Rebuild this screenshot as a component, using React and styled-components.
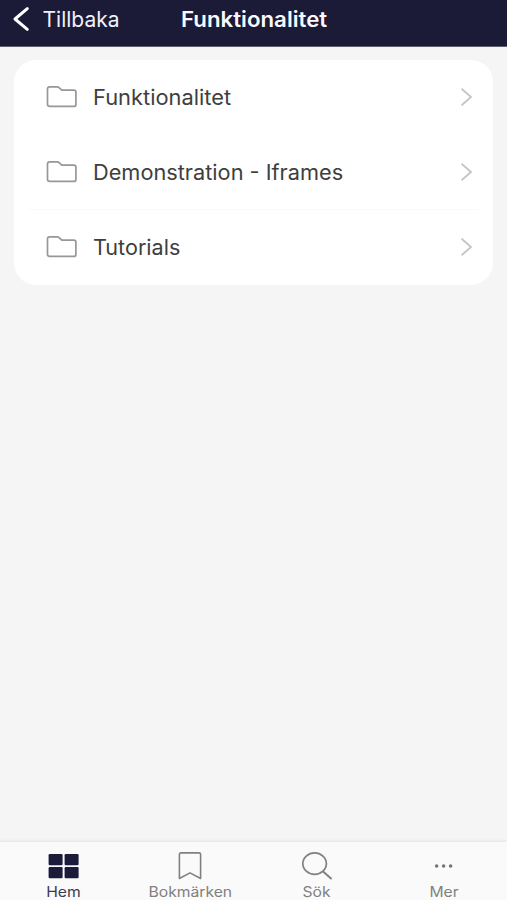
import React from "react";
import styled, { createGlobalStyle } from "styled-components";

// Global Style
const GlobalStyle = createGlobalStyle`
  * {
    box-sizing: border-box;
  }

  body {
    margin: 0;
    font-family: Inter, "Liberation Sans", sans-serif;
    background: #f5f5f5;
  }
`;

const folders = [
  { name: "Funktionalitet", stretch: 1.041 },
  { name: "Demonstration - Iframes", stretch: 1.035, divider: true },
  { name: "Tutorials", stretch: 1.028 },
];

const FolderIcon = () => (
  <svg width="32" height="24" viewBox="0 0 32 24" fill="none" stroke="#979797" strokeWidth="1.7" strokeLinejoin="round">
    <path d="M1.5 4C1.5 2.6 2.3 1.9 3.7 1.9H11.1C12.1 1.9 12.7 2.2 13.4 2.9L15.2 4.6C15.7 5.1 16.1 5.2 16.8 5.2H27.8C29.2 5.2 29.9 5.9 29.9 7.1V19.4C29.9 20.7 29.2 21.4 27.8 21.4H3.7C2.3 21.4 1.5 20.7 1.5 19.4Z" />
  </svg>
);

const ChevronIcon = () => (
  <svg width="14" height="20" viewBox="0 0 14 20" fill="none" stroke="#c6c6c6" strokeWidth="1.9">
    <path d="M1.6 1.8L11 10L1.6 18.2" />
  </svg>
);

const BackIcon = () => (
  <svg width="18" height="26" viewBox="0 0 18 26" fill="none" stroke="#fff" strokeWidth="3" strokeLinecap="round" strokeLinejoin="round">
    <path d="M15.3 2.6L3 13L15.3 23.4" />
  </svg>
);

const HomeIcon = () => (
  <svg width="34" height="30" viewBox="0 0 34 30" fill="#1b1b3a">
    <rect x="2.6" y="2" width="14" height="11.2" rx="1.2" />
    <rect x="18.6" y="2" width="14" height="11.2" rx="1.2" />
    <rect x="2.6" y="15" width="14" height="11.2" rx="1.2" />
    <rect x="18.6" y="15" width="14" height="11.2" rx="1.2" />
  </svg>
);

const BookmarkIcon = () => (
  <svg width="34" height="30" viewBox="0 0 34 30" fill="none" stroke="#808080" strokeWidth="1.6" strokeLinejoin="round">
    <path d="M6.4 26.5V2.5C6.4 1.5 7 0.9 8 0.9H26C27 0.9 27.6 1.5 27.6 2.5V26.5L17 20.9Z" />
  </svg>
);

const SearchIcon = () => (
  <svg width="34" height="30" viewBox="0 0 34 30" fill="none" stroke="#808080" strokeWidth="1.7">
    <ellipse cx="14.6" cy="11.6" rx="11.8" ry="10.7" />
    <path d="M22.8 19.3L31.6 27" strokeWidth="2" />
  </svg>
);

const MoreIcon = () => (
  <svg width="34" height="30" viewBox="0 0 34 30" fill="#757575">
    <circle cx="9.6" cy="14" r="1.8" />
    <circle cx="16.6" cy="14" r="1.8" />
    <circle cx="23.6" cy="14" r="1.8" />
  </svg>
);

const tabs = [
  { name: "Hem", icon: HomeIcon, active: true },
  { name: "Bokmärken", icon: BookmarkIcon },
  { name: "Sök", icon: SearchIcon },
  { name: "Mer", icon: MoreIcon },
];

const App = () => {
  return (
    <>
      <GlobalStyle />
      <Page>
        <Header>
          <BackButton>
            <BackIcon />
            <BackLabel>Tillbaka</BackLabel>
          </BackButton>
          <Title>Funktionalitet</Title>
        </Header>

        <Content>
          <FolderList>
            {folders.map((folder) => (
              <FolderRow key={folder.name} $divider={folder.divider}>
                <FolderIcon />
                <FolderName $stretch={folder.stretch}>{folder.name}</FolderName>
                <ChevronIcon />
              </FolderRow>
            ))}
          </FolderList>
        </Content>

        <TabBar>
          {tabs.map(({ name, icon: Icon, active }) => (
            <Tab key={name} $active={active}>
              <Icon />
              <TabLabel>{name}</TabLabel>
            </Tab>
          ))}
        </TabBar>
      </Page>
    </>
  );
};

export default App;

// Styled Components
const Page = styled.div`
  display: flex;
  flex-direction: column;
  height: 100vh;
  overflow: hidden;
  background: #f5f5f5;
`;

const Header = styled.header`
  display: grid;
  grid-template-columns: 181px 1fr;
  align-items: center;
  flex: none;
  height: 47px;
  padding-bottom: 6px;
  background: #1b1b38;
  border-bottom: 1px solid #5f5f70;
  color: #fff;
`;

const BackButton = styled.button`
  display: flex;
  align-items: center;
  gap: 12.5px;
  padding: 0 0 0 12px;
  border: none;
  background: none;
  color: #f0f0f8;
  font-family: inherit;

  svg {
    margin-bottom: 2px;
  }
`;

const BackLabel = styled.span`
  font-size: 21px;
  line-height: 26px;
  white-space: nowrap;
`;

const Title = styled.h1`
  margin: 0;
  font-size: 21px;
  line-height: 26px;
  font-weight: 600;
  color: #fafafe;
  transform: scaleX(1.06);
  transform-origin: left;
`;

const Content = styled.main`
  flex: 1;
  padding: 13px 14px 0;
`;

const FolderList = styled.ul`
  margin: 0;
  padding: 0;
  list-style: none;
  border-radius: 22px;
  background: #fff;
  overflow: hidden;
`;

const FolderRow = styled.li`
  display: flex;
  align-items: center;
  height: 75px;
  padding: 0 19.5px 0 31.5px;
  background: linear-gradient(#fafafa, #fafafa) 14px 100% / calc(100% - 28px) ${({ $divider }) => ($divider ? "1px" : "0")} no-repeat;

  svg {
    flex: none;
    margin-bottom: 2px;
  }
`;

const FolderName = styled.span`
  flex: 1;
  margin-left: 15.5px;
  font-size: 21px;
  line-height: 28px;
  color: #3e3e3e;
  white-space: nowrap;
  transform: scaleX(${({ $stretch }) => $stretch});
  transform-origin: left;
`;

const TabBar = styled.nav`
  display: grid;
  grid-template-columns: repeat(4, 1fr);
  flex: none;
  height: 58px;
  padding-top: 10px;
  background: #fafafa;
  box-shadow: 0 -1px 3px rgba(0, 0, 0, 0.08);
`;

const Tab = styled.div`
  display: flex;
  flex-direction: column;
  align-items: center;
  color: ${({ $active }) => ($active ? "#3a3a50" : "#808080")};
`;

const TabLabel = styled.span`
  font-size: 14px;
  line-height: 19px;
  transform: scaleX(1.12);
`;
